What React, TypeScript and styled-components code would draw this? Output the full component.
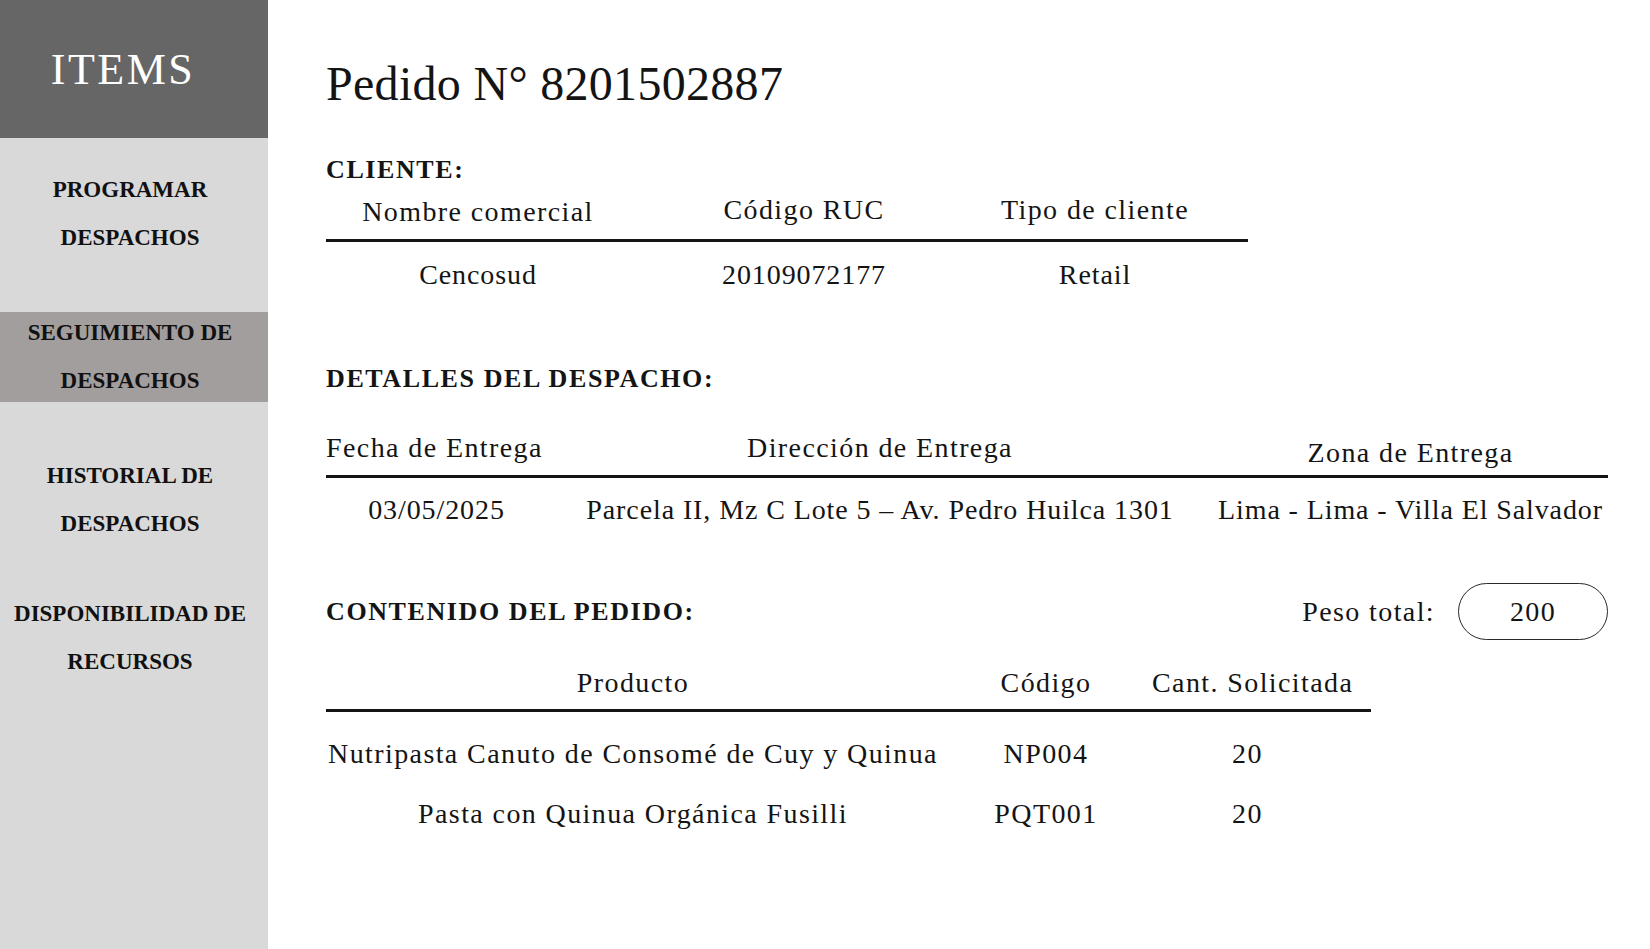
import styled, { createGlobalStyle } from "styled-components";

const GlobalStyle = createGlobalStyle`
  html, body {
    margin: 0;
    padding: 0;
    background: #ffffff;
  }
  body {
    font-family: "Liberation Serif", "Times New Roman", serif;
    color: #141414;
  }
`;

const Layout = styled.div`
  display: flex;
  min-height: 100vh;
`;

const Sidebar = styled.aside`
  width: 268px;
  flex-shrink: 0;
  background: #d9d9d9;
  display: flex;
  flex-direction: column;
`;

const Brand = styled.div`
  height: 138px;
  background: #666666;
  color: #ffffff;
  font-size: 44px;
  letter-spacing: 2.5px;
  display: flex;
  align-items: center;
  justify-content: center;
  padding-right: 22px;
`;

const Menu = styled.nav`
  display: flex;
  flex-direction: column;
  gap: 53px;
  padding: 31px 8px 0 0;
`;

const MenuItem = styled.div<{ $active?: boolean }>`
  height: 90px;
  display: flex;
  flex-direction: column;
  justify-content: center;
  align-items: center;
  background: ${({ $active }) => ($active ? "#a39e9e" : "transparent")};
  font-size: 23px;
  font-weight: 700;
  line-height: 48px;
  color: #111111;
  text-align: center;
  white-space: nowrap;
  margin-right: ${({ $active }) => ($active ? "-8px" : "0")};
  padding-right: ${({ $active }) => ($active ? "8px" : "0")};

  &:last-child {
    margin-top: -5px;
  }
`;

const Main = styled.main`
  flex: 1;
  min-width: 0;
  padding: 55px 42px 40px 58px;
  display: flex;
  flex-direction: column;
`;

const Title = styled.h1`
  margin: 0;
  font-size: 48px;
  font-weight: 400;
  line-height: 58px;
  letter-spacing: 0.3px;
`;

const SectionTitle = styled.h2<{ $top?: number }>`
  margin: ${({ $top }) => $top ?? 0}px 0 0;
  font-size: 26px;
  font-weight: 700;
  line-height: 30px;
  letter-spacing: 1.6px;
`;

const Table = styled.div<{ $width: string; $top: number }>`
  width: ${({ $width }) => $width};
  margin-top: ${({ $top }) => $top}px;
  font-size: 28px;
  line-height: 34px;
  letter-spacing: 1.4px;
`;

const Row = styled.div<{
  $cols: string;
  $padTop?: number;
  $padBottom?: number;
  $padRight?: number;
  $head?: boolean;
  $tight?: boolean;
}>`
  display: grid;
  grid-template-columns: ${({ $cols }) => $cols};
  align-items: start;
  padding: ${({ $padTop }) => $padTop ?? 0}px ${({ $padRight }) => $padRight ?? 0}px
    ${({ $padBottom }) => $padBottom ?? 0}px 0;
  border-bottom: ${({ $head }) => ($head ? "3px solid #141414" : "none")};
  letter-spacing: ${({ $tight }) => ($tight ? "0.9px" : "inherit")};
`;

const Cell = styled.div<{ $align?: "left" | "center"; $drop?: number }>`
  text-align: ${({ $align }) => $align ?? "center"};
  padding-top: ${({ $drop }) => $drop ?? 0}px;
  white-space: nowrap;
`;

const ContentBar = styled.div`
  display: flex;
  align-items: center;
  justify-content: space-between;
  height: 57px;
  margin-top: 56px;
`;

const Weight = styled.div`
  display: flex;
  align-items: center;
  gap: 23px;
  font-size: 28px;
  letter-spacing: 1.4px;
`;

const Pill = styled.div`
  width: 150px;
  height: 57px;
  box-sizing: border-box;
  border: 1.5px solid #2a2a2a;
  border-radius: 29px;
  display: flex;
  align-items: center;
  justify-content: center;
`;

const menu = [
  { lines: ["PROGRAMAR", "DESPACHOS"] },
  { lines: ["SEGUIMIENTO DE", "DESPACHOS"], active: true },
  { lines: ["HISTORIAL DE", "DESPACHOS"] },
  { lines: ["DISPONIBILIDAD DE", "RECURSOS"] },
];

const products = [
  { name: "Nutripasta Canuto de Consomé de Cuy y Quinua", code: "NP004", qty: 20 },
  { name: "Pasta con Quinua Orgánica Fusilli", code: "PQT001", qty: 20 },
];

const clientCols = "304px 348px 234px";
const detailCols = "221px 666px 1fr";
const productCols = "614px 212px 1fr";

const App = () => (
  <Layout>
    <GlobalStyle />
    <Sidebar>
      <Brand>ITEMS</Brand>
      <Menu>
        {menu.map((item) => (
          <MenuItem key={item.lines.join(" ")} $active={item.active}>
            {item.lines.map((line) => (
              <span key={line}>{line}</span>
            ))}
          </MenuItem>
        ))}
      </Menu>
    </Sidebar>

    <Main>
      <Title>Pedido N° 8201502887</Title>

      <SectionTitle $top={42}>CLIENTE:</SectionTitle>
      <Table $width="922px" $top={8}>
        <Row $cols={clientCols} $padBottom={10} $head>
          <Cell $drop={2}>Nombre comercial</Cell>
          <Cell>Código RUC</Cell>
          <Cell>Tipo de cliente</Cell>
        </Row>
        <Row $cols={clientCols} $padTop={16} $tight>
          <Cell>Cencosud</Cell>
          <Cell>20109072177</Cell>
          <Cell>Retail</Cell>
        </Row>
      </Table>

      <SectionTitle $top={72}>DETALLES DEL DESPACHO:</SectionTitle>
      <Table $width="100%" $top={37}>
        <Row $cols={detailCols} $padBottom={5} $head>
          <Cell $align="left">Fecha de Entrega</Cell>
          <Cell>Dirección de Entrega</Cell>
          <Cell $drop={5}>Zona de Entrega</Cell>
        </Row>
        <Row $cols={detailCols} $padTop={15} $tight>
          <Cell>03/05/2025</Cell>
          <Cell>Parcela II, Mz C Lote 5 – Av. Pedro Huilca 1301</Cell>
          <Cell>Lima - Lima - Villa El Salvador</Cell>
        </Row>
      </Table>

      <ContentBar>
        <SectionTitle>CONTENIDO DEL PEDIDO:</SectionTitle>
        <Weight>
          <span>Peso total:</span>
          <Pill>200</Pill>
        </Weight>
      </ContentBar>

      <Table $width="1045px" $top={26}>
        <Row $cols={productCols} $padBottom={9} $padRight={28} $head>
          <Cell>Producto</Cell>
          <Cell>Código</Cell>
          <Cell>Cant. Solicitada</Cell>
        </Row>
        {products.map((p, i) => (
          <Row key={p.code} $cols={productCols} $padRight={28} $padTop={i === 0 ? 25 : 26}>
            <Cell>{p.name}</Cell>
            <Cell>{p.code}</Cell>
            <Cell>{p.qty}</Cell>
          </Row>
        ))}
      </Table>
    </Main>
  </Layout>
);

export default App;
